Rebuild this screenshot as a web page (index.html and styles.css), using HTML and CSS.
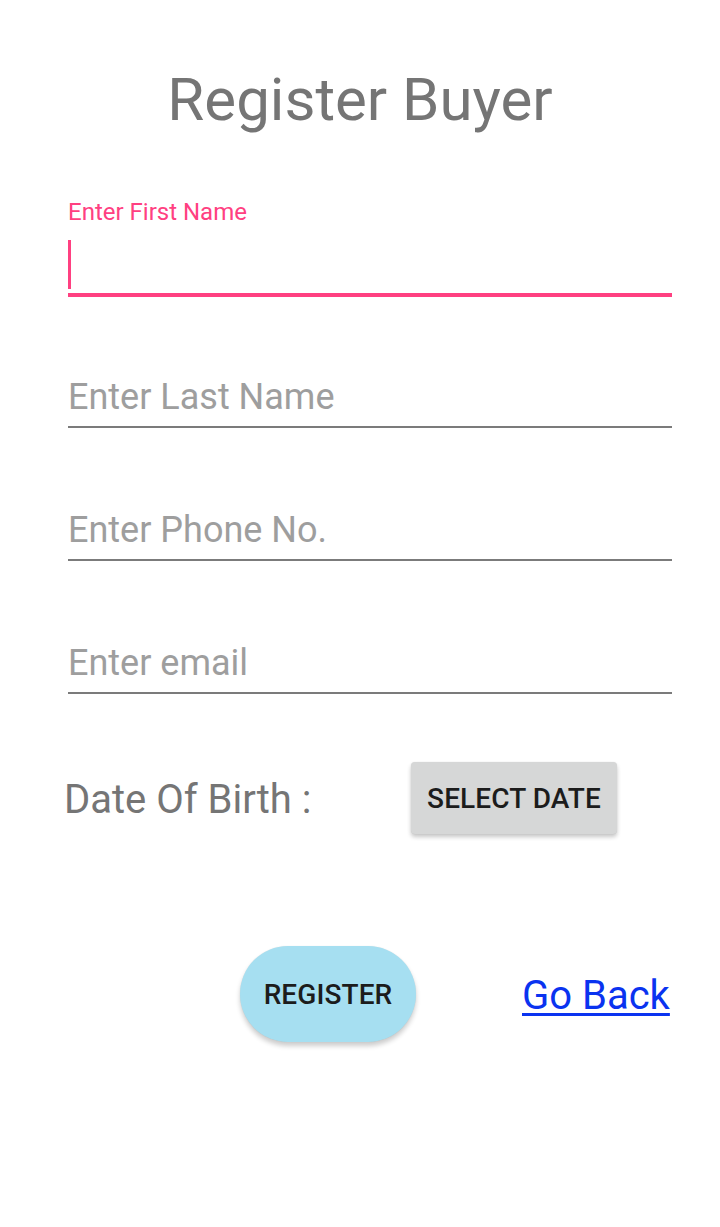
FILE: index.html
```html
<!DOCTYPE html>
<html lang="en">
<head>
<meta charset="utf-8">
<title>Register Buyer</title>
<link rel="stylesheet" href="styles.css">
</head>
<body>
<main class="screen">
  <h1 class="title">Register Buyer</h1>
  <div class="fields">
    <div class="field field--focused">
      <div class="field-label">Enter First Name</div>
      <div class="field-input"><span class="cursor"></span></div>
    </div>
    <div class="field">
      <div class="field-label"></div>
      <div class="field-input"><span class="hint">Enter Last Name</span></div>
    </div>
    <div class="field">
      <div class="field-label"></div>
      <div class="field-input"><span class="hint">Enter Phone No.</span></div>
    </div>
    <div class="field">
      <div class="field-label"></div>
      <div class="field-input"><span class="hint">Enter email</span></div>
    </div>
  </div>
  <div class="dob-row">
    <span class="dob-label">Date Of Birth :</span>
    <button class="btn btn--date" type="button">SELECT DATE</button>
  </div>
  <div class="actions">
    <button class="btn btn--register" type="button">REGISTER</button>
    <a class="go-back" href="#">Go Back</a>
  </div>
</main>
</body>
</html>
```

FILE: styles.css
```css
* {
  box-sizing: border-box;
}

html, body {
  margin: 0;
  padding: 0;
  background: #ffffff;
}

body {
  font-family: Roboto, "Noto Sans", "Liberation Sans", sans-serif;
  width: 720px;
  height: 1227px;
  overflow: hidden;
}

.screen {
  display: flex;
  flex-direction: column;
}

.title {
  margin: 0;
  padding-top: 65px;
  font-size: 60px;
  font-weight: 400;
  line-height: 70px;
  color: #757575;
  text-align: center;
}

.fields {
  margin-top: 63px;
  padding: 0 48px 0 68px;
  display: flex;
  flex-direction: column;
  gap: 36px;
}

.field {
  display: flex;
  flex-direction: column;
  border-bottom: 2px solid #7b7b7b;
}

.field--focused {
  border-bottom-color: #ff4081;
  box-shadow: 0 2px 0 #ff4081;
}

.field-label {
  height: 28px;
  font-size: 24px;
  line-height: 28px;
  color: #ff4081;
}

.field-input {
  height: 67px;
  display: flex;
  align-items: flex-end;
  padding-bottom: 8px;
}

.hint {
  font-size: 36px;
  line-height: 42px;
  color: #9e9e9e;
}

.cursor {
  display: block;
  width: 3px;
  height: 49px;
  margin-bottom: -4px;
  background: #ff4081;
}

.dob-row {
  margin-top: 68px;
  height: 72px;
  padding-left: 64px;
  display: flex;
  align-items: center;
}

.dob-label {
  width: 347px;
  padding-top: 3px;
  font-size: 40px;
  line-height: 47px;
  color: #757575;
}

.btn {
  font-family: Roboto, "Noto Sans", "Liberation Sans", sans-serif;
  font-weight: 500;
  font-size: 28px;
  letter-spacing: 0.1px;
  color: #1c1c1c;
  border: none;
  padding: 0;
  cursor: pointer;
}

.btn--date {
  width: 206px;
  height: 72px;
  background: #d6d7d7;
  border-radius: 4px;
  box-shadow: 0 3px 4px rgba(0, 0, 0, 0.22), 0 0 1px rgba(0, 0, 0, 0.12);
}

.actions {
  margin-top: 112px;
  padding-left: 240px;
  display: flex;
  align-items: center;
  gap: 106px;
}

.btn--register {
  width: 176px;
  height: 96px;
  background: #a6dff1;
  border-radius: 48px;
  box-shadow: 0 4px 5px rgba(0, 0, 0, 0.2), 0 0 1px rgba(0, 0, 0, 0.1);
}

.go-back {
  font-size: 40px;
  line-height: 47px;
  padding-top: 2px;
  color: #0a33f0;
  text-decoration: underline;
  text-decoration-thickness: 3px;
  text-underline-offset: 4px;
}
```
